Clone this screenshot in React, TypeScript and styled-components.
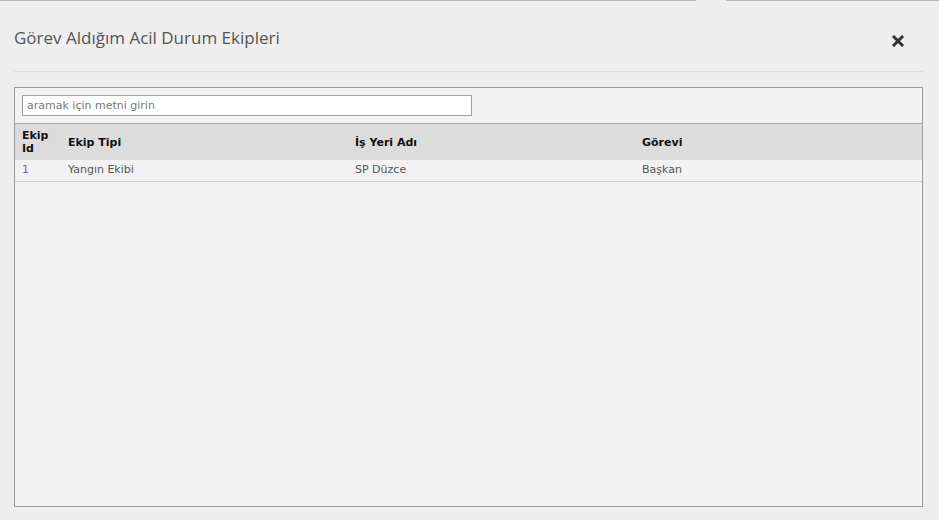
import styled, { createGlobalStyle } from "styled-components";

const GlobalStyle = createGlobalStyle`
  html, body {
    margin: 0;
    padding: 0;
    background: #eeeeee;
  }
`;

const Page = styled.div`
  width: 939px;
  height: 520px;
  background: #eeeeee;
  display: flex;
  flex-direction: column;
  overflow: hidden;
`;

const TopEdge = styled.div`
  height: 1px;
  display: flex;
`;

const EdgeLine = styled.div<{ $w?: number }>`
  height: 1px;
  background: #b4b4b4;
  width: ${(p) => (p.$w ? `${p.$w}px` : "auto")};
  flex: ${(p) => (p.$w ? "none" : "1")};
`;

const EdgeGap = styled.div`
  width: 30px;
`;

const Header = styled.div`
  margin: 0 16px 0 14px;
  height: 70px;
  border-bottom: 1px solid #dcdcdc;
  display: flex;
  align-items: flex-start;
  justify-content: space-between;
`;

const Title = styled.h4`
  margin: 25px 0 0 0;
  font-family: "Open Sans", "Noto Sans", sans-serif;
  font-weight: 400;
  font-size: 17px;
  line-height: 24px;
  color: #555555;
`;

const CloseButton = styled.button`
  margin: 34px 19px 0 0;
  width: 12px;
  height: 12px;
  padding: 0;
  border: 0;
  background: transparent;
  display: flex;
  align-items: center;
  justify-content: center;
  cursor: pointer;
`;

const Panel = styled.div`
  margin: 15px 16px 0 14px;
  height: 418px;
  border: 1px solid #9a9a9a;
  background: #f2f2f2;
  display: flex;
  flex-direction: column;
`;

const SearchBar = styled.div`
  padding: 7px;
  border-bottom: 1px solid #a8a8a8;
`;

const SearchInput = styled.input`
  box-sizing: border-box;
  width: 450px;
  height: 21px;
  border: 1px solid #a0a0a0;
  background: #ffffff;
  padding: 0 4px;
  font-family: "DejaVu Sans", Verdana, sans-serif;
  font-size: 11px;
  color: #555;
  outline: none;

  &::placeholder {
    color: #777777;
  }
`;

const Table = styled.table`
  width: 100%;
  border-collapse: collapse;
  font-family: "DejaVu Sans", Verdana, sans-serif;
  font-size: 11px;
`;

const HeadRow = styled.tr`
  background: #dcdcdc;
  height: 36px;
`;

const Th = styled.th<{ $w?: number }>`
  text-align: left;
  font-weight: 700;
  color: #111111;
  padding: 4px 7px;
  line-height: 13px;
  width: ${(p) => (p.$w ? `${p.$w}px` : "auto")};
  vertical-align: middle;
`;

const BodyRow = styled.tr`
  height: 21px;
  border-bottom: 1px solid #d2d2d2;
`;

const Td = styled.td<{ $link?: boolean }>`
  padding: 0 7px;
  color: ${(p) => (p.$link ? "#7b4dff" : "#555555")};
  line-height: 20px;
`;

const rows = [{ id: 1, tip: "Yangın Ekibi", yer: "SP Düzce", gorev: "Başkan" }];

export default function App() {
  return (
    <>
      <GlobalStyle />
      <Page>
        <TopEdge>
          <EdgeLine />
          <EdgeGap />
          <EdgeLine $w={213} />
        </TopEdge>
        <Header>
          <Title>Görev Aldığım Acil Durum Ekipleri</Title>
          <CloseButton aria-label="Kapat">
            <svg width="12" height="12" viewBox="0 0 12 12">
              <path d="M2 2 L10 10 M10 2 L2 10" stroke="#333" strokeWidth="3" strokeLinecap="square" />
            </svg>
          </CloseButton>
        </Header>
        <Panel>
          <SearchBar>
            <SearchInput placeholder="aramak için metni girin" />
          </SearchBar>
          <Table>
            <thead>
              <HeadRow>
                <Th $w={32}>Ekip Id</Th>
                <Th $w={273}>Ekip Tipi</Th>
                <Th $w={273}>İş Yeri Adı</Th>
                <Th>Görevi</Th>
              </HeadRow>
            </thead>
            <tbody>
              {rows.map((r) => (
                <BodyRow key={r.id}>
                  <Td $link>{r.id}</Td>
                  <Td>{r.tip}</Td>
                  <Td>{r.yer}</Td>
                  <Td>{r.gorev}</Td>
                </BodyRow>
              ))}
            </tbody>
          </Table>
        </Panel>
      </Page>
    </>
  );
}
